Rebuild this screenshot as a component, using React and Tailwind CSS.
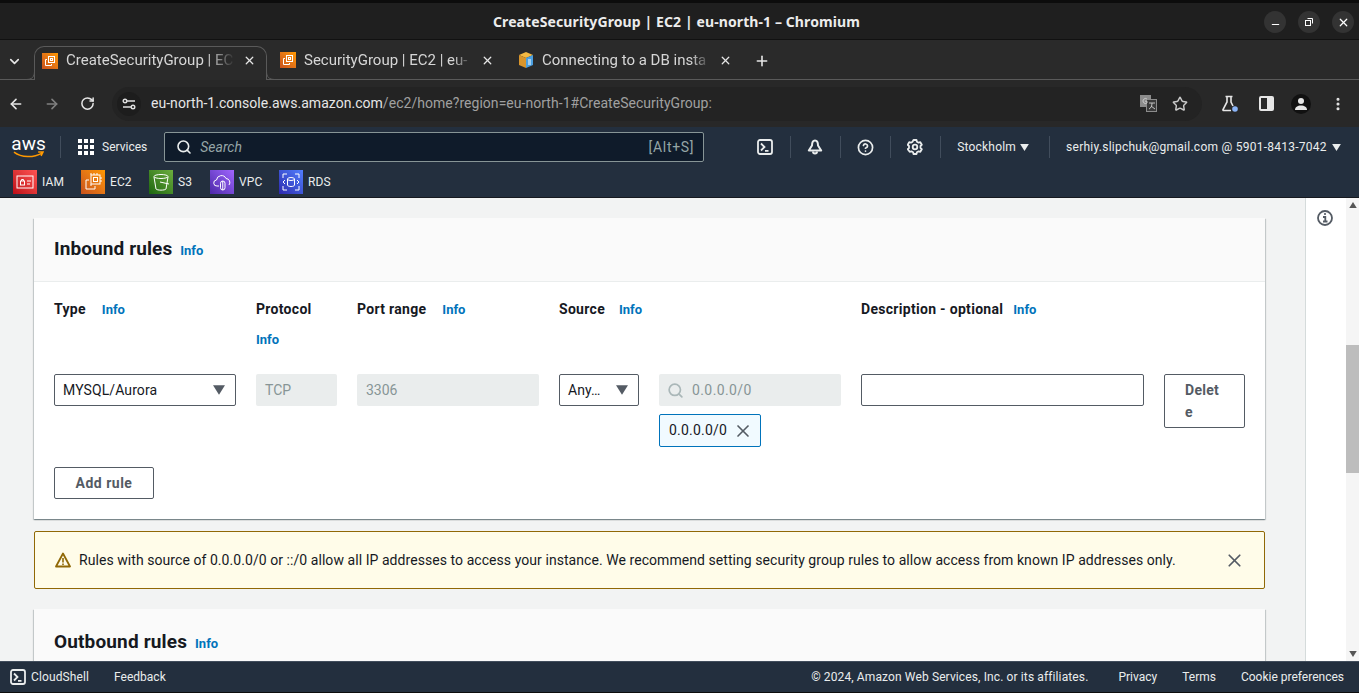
import { Search, X, Star, ArrowLeft, ArrowRight, RotateCw, Plus, ChevronDown, CircleHelp, Minus, EllipsisVertical } from "lucide-react";

const sans = "font-['Roboto',sans-serif]";

const Caret = ({ className = "" }) => (
  <svg viewBox="0 0 10 8" className={className}>
    <path d="M0 0h10L5 8z" fill="currentColor" />
  </svg>
);

const ShellIcon = ({ className = "" }) => (
  <svg viewBox="0 0 16 16" className={className} fill="none" stroke="currentColor" strokeWidth="1.8">
    <rect x="1" y="1" width="14" height="14" rx="2" />
    <path d="M4 4.500 7.500 8 4 11.500M8 11.800h3.500" />
  </svg>
);

const BellIcon = ({ className = "" }) => (
  <svg viewBox="0 0 16 16" className={className} fill="none" stroke="currentColor" strokeWidth="2" strokeLinejoin="round">
    <path d="M8 1.500C5.800 1.500 5 3.500 5 6.500L1.800 11.500h12.400L11 6.500C11 3.500 10.200 1.500 8 1.500z" />
    <path d="M6 12.500a2 2 0 0 0 4 0" />
  </svg>
);

const GearIcon = ({ className = "" }) => (
  <svg viewBox="0 0 16 16" className={className} fill="none" stroke="currentColor" strokeWidth="1.800" strokeLinejoin="round">
    <path d="M6.500 1h3l.4 1.700 1.700 1 1.700-.5 1.500 2.600-1.300 1.200v2l1.300 1.200-1.500 2.600-1.700-.5-1.700 1-.4 1.700h-3l-.4-1.700-1.700-1-1.700.5L.7 10.200 2 9V7L.7 5.800l1.500-2.600 1.700.5 1.700-1z" />
    <circle cx="8" cy="8" r="2.300" />
  </svg>
);

const Ec2Glyph = () => (
  <svg viewBox="0 0 24 24" className="w-full h-full" fill="none" stroke="#fff" strokeWidth="1">
    <rect x="10" y="5" width="9" height="9" />
    <rect x="12.500" y="7.500" width="4" height="4" />
    <path d="M8 10H5v9h9v-3M10 3v2M13 3v2M16 3v2M10 14v2M19 8h2M19 11h2" />
  </svg>
);

const Tile = ({ from, to, label, width, children }) => (
  <div className="flex items-center gap-[5px]">
    <div className={`w-6 h-6 bg-gradient-to-tr ${from} ${to}`}>{children}</div>
    <span className={`text-[12px] text-[#eaeded] tracking-[0.1px] whitespace-nowrap ${width}`}>{label}</span>
  </div>
);

const Ec2Favicon = () => (
  <div className="w-4 h-4 shrink-0 bg-gradient-to-tr from-[#c8511b] to-[#ff9900]">
    <svg viewBox="0 0 16 16" className="w-full h-full" fill="none" stroke="#fff" strokeWidth="1">
      <rect x="6.500" y="3.500" width="6" height="6" />
      <rect x="8.500" y="5.500" width="2" height="2" />
      <path d="M5 6.500H3.500v6h6V11" />
    </svg>
  </div>
);

const BoxFavicon = () => (
  <svg viewBox="0 0 16 16" className="w-4 h-4 shrink-0">
    <path d="M8 0 15 3 8 6 1 3z" fill="#f4b942" />
    <path d="M1 3v10l7 3V6z" fill="#d9952b" />
    <path d="M15 3v10l-7 3V6z" fill="#4a9fe0" />
    <path d="M10 8h3M10 10h3M10 12h3" stroke="#fff" />
  </svg>
);

const ChromeTab = ({ icon, title }) => (
  <div className="flex items-center h-full w-[238px] pl-[13px] pr-[11px] pt-px">
    {icon}
    <span className="ml-2 flex-1 overflow-hidden whitespace-nowrap text-[15px] text-[#d6d6d6] [mask-image:linear-gradient(to_right,black_88%,transparent)]">{title}</span>
    <X size={13} className="ml-2 shrink-0 text-[#e6e6e6]" strokeWidth={2.4} />
  </div>
);

const InfoLink = ({ className = "" }) => (
  <span className={`text-[13px] font-bold text-[#0073bb] ${className}`}>Info</span>
);

const Label = ({ children }) => (
  <span className="text-[14px] font-bold text-[#16191f] tracking-[0.3px]">{children}</span>
);

const DisabledField = ({ children }) => (
  <div className="h-8 flex items-center px-[9px] pt-px bg-[#eaeded] rounded-[2px] text-[14px] text-[#879596]">{children}</div>
);

const SelectField = ({ children }) => (
  <div className="h-8 flex items-center justify-between pl-2 pr-[10px] bg-white border border-[#545b64] rounded-[2px] text-[14px] text-[#16191f] tracking-[0.1px]">
    {children}
    <Caret className="w-3 h-[10px] text-[#545b64]" />
  </div>
);

const cardShadow = "shadow-[0_1px_1px_0_rgba(0,28,36,0.3),1px_1px_1px_0_rgba(0,28,36,0.15),-1px_1px_1px_0_rgba(0,28,36,0.15)]";

export default function App() {
  return (
    <div className={`h-[693px] w-[1359px] overflow-hidden flex flex-col bg-[#0c0c0c] ${sans}`}>
      {/* window title */}
      <div className="mt-[3px] h-[37px] shrink-0 relative flex items-center justify-center bg-[#1f1f1f] border-b border-[#111]">
        <span className="ml-[-6px] font-['Noto_Sans',sans-serif] text-[14px] font-bold tracking-[0.1px] text-[#ececec]">CreateSecurityGroup | EC2 | eu-north-1 – Chromium</span>
        <div className="absolute right-[5px] top-[8px] flex gap-3">
          <div className="w-[22px] h-[22px] rounded-full bg-[#333] flex items-center justify-center"><Minus size={11} strokeWidth={2.4} className="text-white mt-1" /></div>
          <div className="w-[22px] h-[22px] rounded-full bg-[#333] flex items-center justify-center">
            <svg viewBox="0 0 10 10" className="w-[10px] h-[10px]" fill="none" stroke="#fff"><rect x="1.500" y="3.500" width="5" height="5" /><path d="M3.500 1.500h5v5" /></svg>
          </div>
          <div className="w-[22px] h-[22px] rounded-full bg-[#333] flex items-center justify-center"><X size={13} strokeWidth={2.2} className="text-white" /></div>
        </div>
      </div>

      {/* tab strip */}
      <div className="h-10 shrink-0 flex items-end bg-[#2a2a2a] border-b border-[#5a5a5a]">
        <div className="w-[34px] h-full flex items-center justify-center pt-1">
          <ChevronDown size={15} strokeWidth={2.6} className="text-[#e6e6e6] mr-[6px]" />
        </div>
        <div className="relative z-10 -mb-px flex items-center w-[233px] h-[34px] pl-[7px] pr-[10px] pb-[6px] bg-[#2a2a2a] border border-b-0 border-[#5a5a5a] rounded-t-[10px]">
          <svg viewBox="0 0 9 9" className="absolute left-[-9px] bottom-0 w-[9px] h-[9px]" fill="none" stroke="#5a5a5a"><path d="M0 8.500C6 8.500 8.500 6 8.500 0" /></svg>
          <svg viewBox="0 0 9 9" className="absolute right-[-9px] bottom-0 w-[9px] h-[9px]" fill="none" stroke="#5a5a5a"><path d="M9 8.500C3 8.500 .5 6 .5 0" /></svg>
          <Ec2Favicon />
          <span className="ml-2 flex-1 overflow-hidden whitespace-nowrap text-[15px] text-[#d6d6d6] [mask-image:linear-gradient(to_right,black_84%,transparent)]">CreateSecurityGroup | EC</span>
          <X size={13} className="ml-2 shrink-0 text-[#e6e6e6]" strokeWidth={2.4} />
        </div>
        <ChromeTab icon={<Ec2Favicon />} title="SecurityGroup | EC2 | eu-" />
        <ChromeTab icon={<BoxFavicon />} title="Connecting to a DB insta" />
        <Plus size={16} strokeWidth={2.4} className="ml-[11px] mb-[10px] text-[#e6e6e6]" />
      </div>

      {/* toolbar */}
      <div className="h-[47px] shrink-0 flex items-center bg-[#282828] pl-[8px]">
        <ArrowLeft size={16} strokeWidth={2.4} className="text-[#e6e6e6]" />
        <ArrowRight size={16} strokeWidth={2.4} className="ml-[20px] text-[#808080]" />
        <RotateCw size={15} strokeWidth={2.4} className="ml-[20px] text-[#e6e6e6]" />
        <div className="ml-[17px] w-[1090px] h-[34px] rounded-full bg-[#232323] flex items-center pl-[5px] pr-[14px]">
          <div className="w-6 h-6 rounded-full bg-[#1d1d1d] flex items-center justify-center">
            <svg viewBox="0 0 14 14" className="w-[14px] h-[14px]" fill="none" stroke="#e0e0e0" strokeWidth="1.400"><path d="M5 4h8M1 10h8" /><circle cx="3" cy="4" r="1.800" /><circle cx="11" cy="10" r="1.800" /></svg>
          </div>
          <span className="ml-[10px] text-[14px] text-[#e6e6e6] tracking-[0.035px] whitespace-nowrap">eu-north-1.console.aws.amazon.com<span className="text-[#a0a0a0]">/ec2/home?region=eu-north-1#CreateSecurityGroup:</span></span>
          <div className="ml-auto flex items-center gap-[15px]">
            <svg viewBox="0 0 17 17" className="w-[17px] h-[17px]">
              <rect x="0" y="0" width="11" height="12" fill="#8c8c8c" />
              <rect x="6.500" y="4.500" width="10" height="12" fill="#3a3a3a" stroke="#8c8c8c" />
              <path d="M7 4a2.500 2.500 0 1 0 0 4V6.200H5M9 8h6M12 8c0 3-1 5-3 6M11 11l4 3" stroke="#d0d0d0" strokeWidth=".9" fill="none" />
            </svg>
            <Star size={16} strokeWidth={2.2} className="text-[#c8c8c8]" />
          </div>
        </div>
        <svg viewBox="0 0 18 18" className="ml-[19px] w-[18px] h-[18px]" fill="none" stroke="#e6e6e6" strokeWidth="1.600">
          <path d="M4.500 1.500h7M6 1.500V7L2 14.500c-.3.600.1 1 .7 1H10M10 1.500V7L12 11" />
          <circle cx="14" cy="14" r="2.800" fill="#8ab4f8" stroke="none" />
        </svg>
        <div className="ml-[20px] w-[15px] h-[15px] rounded-[2px] border-2 border-[#e6e6e6] flex justify-end"><div className="w-[5px] h-full bg-[#e6e6e6]" /></div>
        <div className="ml-[17px] w-5 h-5 rounded-full bg-[#111] flex items-center justify-center">
          <svg viewBox="0 0 14 14" className="w-[14px] h-[14px]" fill="#e6e6e6"><circle cx="7" cy="4" r="3" /><path d="M1 13c0-3 2.500-4.500 6-4.500s6 1.500 6 4.500z" /></svg>
        </div>
        <EllipsisVertical size={16} strokeWidth={2.6} className="ml-[19px] text-[#e6e6e6]" />
      </div>

      {/* aws console nav */}
      <div className="h-[71px] shrink-0 bg-[#232f3e] border-b border-[#16191f]">
        <div className="h-10 flex items-center text-[#eaeded]">
          <div className="ml-[13px] w-[31px] flex flex-col items-center">
            <span className="text-[19px] leading-[15px] text-white">aws</span>
            <svg viewBox="0 0 32 7" className="w-[31px] h-[7px]"><path d="M1 1c8 6 20 6 29 1M26 1l5 0-2 4" stroke="#ff9900" strokeWidth="1.500" fill="none" /></svg>
          </div>
          <div className="ml-4 w-px h-[22px] bg-[#414d5c]" />
          <div className="ml-[17px] grid grid-cols-3 gap-[2px]">
            {Array.from({ length: 9 }).map((_, i) => (
              <div key={i} className="w-1 h-1 bg-white" />
            ))}
          </div>
          <span className="ml-2 text-[12px]">Services</span>
          <div className="ml-[17px] w-[540px] h-[30px] bg-[#0f1b2a] border border-[#879596] rounded-[2px] flex items-center pl-[11px] pr-[9px]">
            <Search size={16} strokeWidth={2.4} className="text-[#eaeded]" />
            <span className="ml-2 mt-px text-[14px] italic text-[#95a5a6]">Search</span>
            <span className="ml-auto mt-px text-[14px] tracking-[0.7px] text-[#95a5a6]">[Alt+S]</span>
          </div>
          <ShellIcon className="ml-[53px] w-4 h-4" />
          <div className="ml-[17px] w-px h-[22px] bg-[#414d5c]" />
          <BellIcon className="ml-[16px] w-4 h-4" />
          <div className="ml-[17px] w-px h-[22px] bg-[#414d5c]" />
          <CircleHelp size={17} strokeWidth={2.4} className="ml-[16px]" />
          <div className="ml-[16px] w-px h-[22px] bg-[#414d5c]" />
          <GearIcon className="ml-[16px] w-4 h-4" />
          <div className="ml-[17px] w-px h-[22px] bg-[#414d5c]" />
          <span className="ml-[16px] text-[12px] tracking-[0.2px]">Stockholm</span>
          <Caret className="ml-[4px] w-[9px] h-[7px]" />
          <div className="ml-[20px] w-px h-[22px] bg-[#414d5c]" />
          <span className="ml-[16px] text-[12px] tracking-[0.25px] whitespace-nowrap">serhiy.slipchuk@gmail.com @ 5901-8413-7042</span>
          <Caret className="ml-[5px] w-[9px] h-[7px]" />
        </div>
        <div className="mt-[3px] flex items-center pl-[13px] gap-[18px]">
          <Tile from="from-[#bd0816]" to="to-[#ff5252]" label="IAM" width="w-[21px]">
            <svg viewBox="0 0 24 24" className="w-full h-full" fill="none" stroke="#fff"><rect x="4" y="6" width="16" height="12" /><rect x="7.500" y="11" width="4" height="4" /><path d="M8.500 11V9.500h2V11M14 11h4M14 14h3" /></svg>
          </Tile>
          <Tile from="from-[#c8511b]" to="to-[#ff9900]" label="EC2" width="w-[21px]"><Ec2Glyph /></Tile>
          <Tile from="from-[#1b660f]" to="to-[#6cae3e]" label="S3" width="w-[14px]">
            <svg viewBox="0 0 24 24" className="w-full h-full" fill="none" stroke="#fff"><ellipse cx="12" cy="6.500" rx="7" ry="2" /><path d="M5 7l2 12c1 1.500 9 1.500 10 0l2-12M11 12l9 2" /></svg>
          </Tile>
          <Tile from="from-[#4d27a8]" to="to-[#a166ff]" label="VPC" width="w-[22px]">
            <svg viewBox="0 0 24 24" className="w-full h-full" fill="none" stroke="#fff"><path d="M9 16H7a3 3 0 0 1-.5-6A5 5 0 0 1 16 8.500 4 4 0 0 1 19 15" /><rect x="10.500" y="11" width="4.500" height="9" rx="2.250" /><path d="M12.750 11v9" /></svg>
          </Tile>
          <Tile from="from-[#2e27ad]" to="to-[#527fff]" label="RDS" width="w-[22px]">
            <svg viewBox="0 0 24 24" className="w-full h-full" fill="none" stroke="#fff"><ellipse cx="12" cy="9" rx="3.500" ry="1.500" /><path d="M8.500 9v6c0 2 7 2 7 0V9M4 8V4h4M20 8V4h-4M4 16v4h4M20 16v4h-4M6 10l-2 2 2 2M18 10l2 2-2 2" /></svg>
          </Tile>
        </div>
      </div>

      {/* page */}
      <div className="relative flex-1 min-h-0 flex bg-[#f2f3f3]">
        <main className="w-[1305px] h-full overflow-hidden pt-5 pl-[34px] pr-[40px]">
          <section className={`bg-white ${cardShadow}`}>
            <div className="h-[64px] flex items-center px-5 bg-[#fafafa] border-b border-[#eaeded]">
              <h2 className="text-[19px] font-bold tracking-[0.1px] text-[#16191f] leading-6 mb-[2px]">Inbound rules</h2>
              <InfoLink className="ml-2 mt-[3px]" />
            </div>
            <div className="px-5 pt-[17px] pb-5">
              <div className="grid grid-cols-[182px_81px_182px_80px_182px_283px_81px] gap-x-5">
                <div className="flex items-start gap-4 h-[75px] leading-5"><Label>Type</Label><InfoLink className="mt-px" /></div>
                <div className="flex flex-col gap-[11px] leading-5"><Label>Protocol</Label><InfoLink /></div>
                <div className="flex items-start gap-4 leading-5"><Label>Port range</Label><InfoLink className="mt-px" /></div>
                <div className="flex items-start col-span-2 gap-[14px] leading-5"><Label>Source</Label><InfoLink className="mt-px" /></div>
                <div className="flex items-start col-span-2 gap-[10px] leading-5"><Label>Description - optional</Label><InfoLink className="mt-px" /></div>

                <SelectField>MYSQL/Aurora</SelectField>
                <DisabledField>TCP</DisabledField>
                <DisabledField>3306</DisabledField>
                <SelectField>Any…</SelectField>
                <div>
                  <DisabledField>
                    <Search size={17} strokeWidth={2.4} className="text-[#aab7b8] mr-2 ml-[-1px]" />
                    <span className="tracking-[0.4px]">0.0.0.0/0</span>
                  </DisabledField>
                  <div className="mt-2 w-[102px] h-[33px] flex items-center justify-between pl-[9px] pr-[7px] bg-[#f1faff] border border-[#0073bb] rounded-[2px] text-[14px] text-[#16191f] tracking-[0.2px]">
                    0.0.0.0/0
                    <X size={20} strokeWidth={2} className="text-[#545b64]" />
                  </div>
                </div>
                <div className="h-8 bg-white border border-[#545b64] rounded-[2px]" />
                <div className="h-[54px] bg-white border border-[#545b64] rounded-[2px] px-5 py-[4px] text-[14px] font-bold leading-[22px] tracking-[0.3px] text-[#545b64] break-all">Delete</div>
              </div>
              <div className="mt-5 w-[100px] h-8 flex items-center justify-center bg-white border border-[#545b64] rounded-[2px] text-[14px] font-bold tracking-[0.5px] text-[#545b64]">Add rule</div>
            </div>
          </section>

          <div className="mt-3 h-[58px] flex items-center pl-5 pr-[19px] bg-[#fffce9] border border-[#906806] rounded-[2px] text-[14px] text-[#16191f]">
            <svg viewBox="0 0 16 16" className="w-4 h-4 shrink-0" fill="none" stroke="#906806" strokeWidth="1.800">
              <path d="M8 1.500 15 14.500H1z" strokeLinejoin="round" />
              <path d="M8 6v4.500M8 11.500v1.500" strokeWidth="1.600" />
            </svg>
            <span className="ml-2 tracking-[0.06px] whitespace-nowrap">Rules with source of 0.0.0.0/0 or ::/0 allow all IP addresses to access your instance. We recommend setting security group rules to allow access from known IP addresses only.</span>
            <X size={21} strokeWidth={2} className="ml-auto text-[#545b64]" />
          </div>

          <section className={`mt-5 bg-white ${cardShadow}`}>
            <div className="h-[64px] flex items-center px-5 bg-[#fafafa] border-b border-[#eaeded]">
              <h2 className="mt-[2px] text-[19px] font-bold tracking-[0.15px] text-[#16191f] leading-6">Outbound rules</h2>
              <InfoLink className="ml-2 mt-[7px]" />
            </div>
          </section>
        </main>

        <aside className="w-[41px] bg-white border-l border-[#d5dbdb] flex justify-center pt-[12px]">
          <svg viewBox="0 0 16 16" className="w-4 h-4 mr-[2px]" fill="none" stroke="#545b64" strokeWidth="1.800">
            <circle cx="8" cy="8" r="7" />
            <path d="M6 7h2.300v4M6 11.500h4.500M7.200 4h1.600" />
          </svg>
        </aside>

        {/* scrollbar */}
        <div className="relative w-[13px] bg-[#f5f5f5] flex flex-col items-center justify-between py-1">
          <Caret className="w-2 h-[6px] text-[#555] rotate-180" />
          <div className="absolute top-[147px] w-[13px] h-[128px] bg-[#bdbdbd]" />
          <Caret className="w-2 h-[6px] text-[#555]" />
        </div>
      </div>

      {/* console footer */}
      <div className="h-[31px] mb-[1px] shrink-0 flex items-center bg-[#232f3e] border-t border-[#414d5c] pl-[10px] pr-[15px] text-[12px] text-[#eaeded]">
        <ShellIcon className="w-4 h-4" />
        <span className="ml-[5px] tracking-[0.12px]">CloudShell</span>
        <span className="ml-[25px]">Feedback</span>
        <span className="ml-auto tracking-[0.12px]">© 2024, Amazon Web Services, Inc. or its affiliates.</span>
        <span className="ml-[30px]">Privacy</span>
        <span className="ml-[25px]">Terms</span>
        <span className="ml-[25px]">Cookie preferences</span>
      </div>
    </div>
  );
}
